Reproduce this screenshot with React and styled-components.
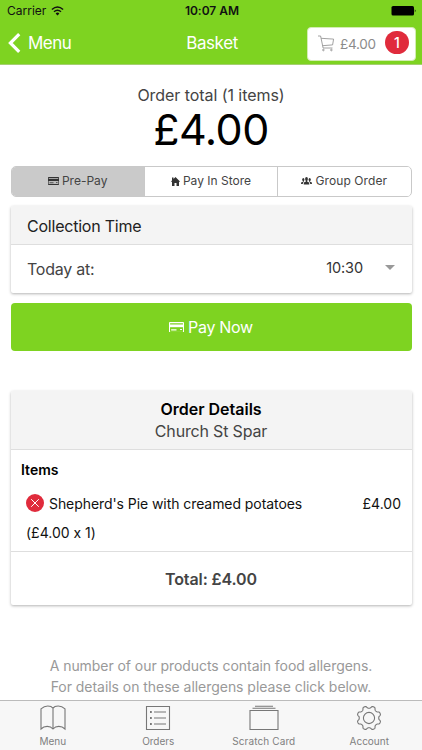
import styled, { createGlobalStyle } from "styled-components";

const GREEN = "#7ed321";
const RED = "#e02b3c";
const BORDER = "#dedede";

const GlobalStyle = createGlobalStyle`
    * {
        box-sizing: border-box;
    }

    body {
        margin: 0;
        background: #fff;
        font-family: Inter, "Liberation Sans", sans-serif;
        font-feature-settings: "calt" 0;
    }

    svg {
        display: block;
        flex: none;
    }
`

const Screen = styled.div`
    width: 422px;
    height: 750px;
    display: flex;
    flex-direction: column;
    overflow: hidden;
`

const Text = styled.span`
    display: block;
    white-space: nowrap;
    font-size: ${({ $size }) => $size}px;
    line-height: ${({ $line }) => $line || 20}px;
    font-weight: ${({ $weight }) => $weight || 400};
    letter-spacing: ${({ $spacing }) => $spacing || 0}px;
    color: ${({ $color }) => $color || "#444"};
`

const Header = styled.header`
    flex: none;
    height: 65px;
    background: ${GREEN};
    border-bottom: 1px solid #a5cf70;
`

const StatusBar = styled.div`
    display: grid;
    grid-template-columns: 1fr auto 1fr;
    align-items: center;
    height: 22px;
    padding: 0 5px 0 7px;
`

const Carrier = styled.div`
    display: flex;
    align-items: center;
    gap: 5px;
`

const Battery = styled.div`
    justify-self: end;
`

const NavBar = styled.nav`
    display: grid;
    grid-template-columns: 1fr auto 1fr;
    align-items: center;
    height: 42px;
    padding: 0 6px 0 8px;
`

const BackButton = styled.div`
    display: flex;
    align-items: center;
    gap: 7px;
`

const CartButton = styled.div`
    justify-self: end;
    display: flex;
    align-items: center;
    width: 109px;
    height: 34px;
    margin-top: 1px;
    padding-left: 10px;
    border: 1px solid #d3ecb4;
    border-radius: 4px;
    background: #fff;
`

const CartPrice = styled(Text)`
    width: 45px;
    padding-left: 5px;
`

const Badge = styled.div`
    display: flex;
    justify-content: center;
    width: 24px;
    height: 23px;
    margin: -3px 0 0 5px;
    border-radius: 12px;
    background: ${RED};
`

const Content = styled.main`
    flex: 1;
    min-height: 0;
    overflow: hidden;
    padding: 20px 10.5px 0;
`

const OrderTotal = styled.div`
    display: flex;
    flex-direction: column;
    align-items: center;
    height: 81px;
`

const Segments = styled.div`
    display: flex;
    height: 31px;
    border: 1px solid #c9c9c9;
    border-radius: 5px;
    overflow: hidden;
`

const Segment = styled.div`
    flex: 1;
    display: flex;
    align-items: center;
    justify-content: center;
    gap: 3px;
    padding-bottom: 1px;
    background: ${({ $active }) => ($active ? "#cacaca" : "#fff")};

    & + & {
        border-left: 1px solid #c9c9c9;
    }
`

const Card = styled.section`
    margin-top: ${({ $top }) => $top}px;
    height: ${({ $height }) => $height}px;
    border-radius: 2px;
    background: #fff;
    box-shadow: 0 1px 3px rgba(0, 0, 0, 0.3);
    overflow: hidden;
`

const CardHeader = styled.div`
    height: ${({ $height }) => $height}px;
    padding: 0 16.5px;
    background: #f4f4f4;
    border-bottom: 1px solid ${BORDER};
`

const DetailsHeader = styled(CardHeader)`
    display: flex;
    flex-direction: column;
    align-items: center;
    padding-top: 7px;
`

const TimeRow = styled.div`
    display: flex;
    align-items: center;
    height: 48px;
    padding: 0 16.5px;
`

const TimeValue = styled(Text)`
    margin: -3px 22px 0 auto;
`

const Arrow = styled.i`
    margin-top: -3px;
    border: 5px solid transparent;
    border-top: 5px solid #999;
    border-bottom: 0;
`

const PayButton = styled.div`
    display: flex;
    align-items: center;
    justify-content: center;
    gap: 4px;
    height: 48px;
    margin-top: 10px;
    border-radius: 4px;
    background: ${GREEN};
`

const Items = styled.div`
    height: 102px;
    padding: 10px 10.5px 0;
    border-bottom: 1px solid ${BORDER};
`

const ItemRow = styled.div`
    display: flex;
    align-items: center;
    height: 28px;
    margin-top: 9px;
    padding-left: 5px;
`

const ItemName = styled(Text)`
    flex: 1;
    margin: 2px 0 0 5px;
`

const ItemPrice = styled(Text)`
    margin-top: 2px;
`

const ItemCount = styled(Text)`
    padding: 6px 0 0 5px;
`

const Total = styled.div`
    display: flex;
    justify-content: center;
    padding-top: 17px;
`

const Allergens = styled.div`
    display: flex;
    flex-direction: column;
    align-items: center;
    margin-top: 51px;
`

const TabBar = styled.footer`
    flex: none;
    display: grid;
    grid-template-columns: repeat(4, 1fr);
    height: 50px;
    border-top: 1px solid #bbb;
    background: #f7f7f7;
`

const Tab = styled.div`
    display: flex;
    flex-direction: column;
    align-items: center;
    padding-top: 3px;
`

const WifiIcon = () => (
    <svg width="13" height="10" viewBox="0 0 13 10" fill="none" stroke="#111" strokeWidth="1.5">
        <path d="M.9 3.5Q6.5-1.6 12.1 3.5M3 5.8Q6.5 2.7 10 5.8" />
        <path d="M4.6 7.4Q6.5 5.8 8.4 7.4L6.5 9.4z" fill="#111" stroke="none" />
    </svg>
)

const BatteryIcon = () => (
    <svg width="26" height="12" viewBox="0 0 26 12">
        <rect x=".5" y="1" width="22.5" height="9.6" rx="1.6" fill="#000" />
        <path d="M23.8 4.2q1.8 1.6 0 3.3z" fill="#000" />
    </svg>
)

const BackIcon = () => (
    <svg width="13" height="20" viewBox="0 0 13 20" fill="none" stroke="#fff" strokeWidth="3.2">
        <path d="M11.2 1.2L2.4 10l8.8 8.8" />
    </svg>
)

const CartIcon = () => (
    <svg width="17" height="17" viewBox="0 0 17 17" fill="none" stroke="#8a8a8a" strokeWidth=".8">
        <path d="M0 1h2.6l2.5 12h9.4M3.2 3.3l12.4.8-1 5.8-10 .8" />
        <circle cx="5.4" cy="15" r=".8" />
        <circle cx="13.4" cy="15" r=".8" />
    </svg>
)

const CardIcon = ({ width, color, gap }) => (
    <svg width={width} height={width * 0.72} viewBox="0 0 14 10">
        <path
            fill={color}
            fillRule="evenodd"
            d="M.8 0h12.4q.8 0 .8.8v8.4q0 .8-.8.8H.8Q0 10 0 9.2V.8Q0 0 .8 0zM1 1.1v1.2h12V1.1zM1 5v4h12V5z"
        />
        <path d="M1 5h12v4H1z" fill={gap} />
        <path d="M2 7.3h5M10.3 7h1.8" stroke={color} strokeWidth="1" />
    </svg>
)

const HomeIcon = () => (
    <svg width="9" height="9" viewBox="0 0 9 9" fill="#333">
        <path d="M4.5 0L9 4.4l-.6.6L8 4.6V9H5.5V6h-2v3H1V4.6l-.4.4L0 4.4l1-1V.5h1.5v1.4z" />
    </svg>
)

const GroupIcon = () => (
    <svg width="11" height="8" viewBox="0 0 11 8" fill="#333">
        <ellipse cx="5.5" cy="2" rx="1.4" ry="2" />
        <ellipse cx="2.3" cy="2.6" rx="1.1" ry="1.6" />
        <ellipse cx="8.7" cy="2.6" rx="1.1" ry="1.6" />
        <path d="M4.9 3h1.2v1.4l1.6.8q.6.5.6 2.3H2.7q0-1.8.6-2.3l1.6-.8zM2 4h.7v1q-.9.6-.9 2H0q0-1.6.7-1.9L2 4.7zM9 4h-.7v1q.9.6.9 2H11q0-1.6-.7-1.9L9 4.7z" />
    </svg>
)

const RemoveIcon = () => (
    <svg width="18" height="18" viewBox="0 0 18 18">
        <circle cx="9" cy="9" r="9" fill={RED} />
        <path d="M5.2 5.2l7.6 7.6M12.8 5.2l-7.6 7.6" stroke="#fff" strokeWidth="1" />
    </svg>
)

const TabIcon = styled.svg.attrs({ width: 30, height: 28, viewBox: "0 0 30 28" })`
    fill: none;
    stroke: #777;
    stroke-width: 1.1;
`

const BookIcon = () => (
    <TabIcon>
        <path d="M15 4.2V25M15 4.2Q13.5 2 9.8 2T3 4.8V25Q5.5 22.4 9.2 22.4T15 25Q17.2 22.4 20.8 22.4T27 25V4.8Q24 2 20.2 2T15 4.2z" />
    </TabIcon>
)

const ListIcon = () => (
    <TabIcon>
        <path d="M3.5 2.5h23v23h-23zM11 8h12M11 14h12M11 20h12" />
        <path d="M7 8h1.8M7 14h1.8M7 20h1.8" strokeWidth="1.8" />
    </TabIcon>
)

const AlbumsIcon = () => (
    <TabIcon>
        <path d="M1 6.5h28v19H1zM3.5 4.3h23M6 2.2h18" />
    </TabIcon>
)

// eight teeth, with a gap straight up
const gearPath = Array.from({ length: 160 }, (_, i) => {
    const angle = (i / 160) * Math.PI * 2;
    const radius = 10.9 + 1.2 * Math.tanh(-1.8 * Math.cos(angle * 8));
    const x = 15 + radius * Math.sin(angle);
    const y = 14 - radius * Math.cos(angle);
    return `${i ? "L" : "M"}${x.toFixed(2)} ${y.toFixed(2)}`;
}).join("") + "z";

const GearIcon = () => (
    <TabIcon>
        <path d={gearPath} />
        <circle cx="15" cy="14" r="5.6" />
    </TabIcon>
)

const tabs = [
    { name: "Menu", Icon: BookIcon },
    { name: "Orders", Icon: ListIcon },
    { name: "Scratch Card", Icon: AlbumsIcon, spacing: 0.12 },
    { name: "Account", Icon: GearIcon },
];

const App = () => {
    return (
        <Screen>
            <GlobalStyle />
            <Header>
                <StatusBar>
                    <Carrier>
                        <Text $size={12} $color="#111">Carrier</Text>
                        <WifiIcon />
                    </Carrier>
                    <Text $size={12} $weight={600} $color="#111">10:07 AM</Text>
                    <Battery><BatteryIcon /></Battery>
                </StatusBar>
                <NavBar>
                    <BackButton>
                        <BackIcon />
                        <Text $size={17} $spacing={-0.5} $color="#fff">Menu</Text>
                    </BackButton>
                    <Text $size={17} $spacing={-0.4} $color="#fff">Basket</Text>
                    <CartButton>
                        <CartIcon />
                        <CartPrice $size={13.5} $spacing={-0.3} $color="#8b8b8b">£4.00</CartPrice>
                        <Badge><Text $size={14} $line={23} $weight={500} $color="#fff">1</Text></Badge>
                    </CartButton>
                </NavBar>
            </Header>
            <Content>
                <OrderTotal>
                    <Text $size={16} $spacing={-0.06}>Order total (1 items)</Text>
                    <Text $size={43} $line={49} $spacing={-0.5} $color="#000">£4.00</Text>
                </OrderTotal>
                <Segments>
                    <Segment $active>
                        <CardIcon width={11} color="#333" gap="#bbb" />
                        <Text $size={12}>Pre-Pay</Text>
                    </Segment>
                    <Segment>
                        <HomeIcon />
                        <Text $size={12}>Pay In Store</Text>
                    </Segment>
                    <Segment>
                        <GroupIcon />
                        <Text $size={12} $spacing={0.1}>Group Order</Text>
                    </Segment>
                </Segments>
                <Card $top={9} $height={87}>
                    <CardHeader $height={39}>
                        <Text $size={16} $line={40} $spacing={-0.22} $color="#222">Collection Time</Text>
                    </CardHeader>
                    <TimeRow>
                        <Text $size={16} $spacing={-0.25}>Today at:</Text>
                        <TimeValue $size={14.5} $spacing={-0.1} $color="#333">10:30</TimeValue>
                        <Arrow />
                    </TimeRow>
                </Card>
                <PayButton>
                    <CardIcon width={15} color="#fff" gap={GREEN} />
                    <Text $size={16} $spacing={-0.3} $color="#fff">Pay Now</Text>
                </PayButton>
                <Card $top={40} $height={214}>
                    <DetailsHeader $height={59}>
                        <Text $size={16} $line={22} $weight={600} $color="#000">Order Details</Text>
                        <Text $size={16} $line={22} $spacing={-0.17}>Church St Spar</Text>
                    </DetailsHeader>
                    <Items>
                        <Text $size={14} $weight={600} $color="#000">Items</Text>
                        <ItemRow>
                            <RemoveIcon />
                            <ItemName $size={14} $spacing={-0.07} $color="#111">Shepherd's Pie with creamed potatoes</ItemName>
                            <ItemPrice $size={14} $color="#111">£4.00</ItemPrice>
                        </ItemRow>
                        <ItemCount $size={14} $color="#111">(£4.00 x 1)</ItemCount>
                    </Items>
                    <Total>
                        <Text $size={16} $weight={600} $spacing={-0.1} $color="#444">Total: £4.00</Text>
                    </Total>
                </Card>
                <Allergens>
                    <Text $size={14} $spacing={-0.06} $color="#999">A number of our products contain food allergens.</Text>
                    <Text $size={14} $line={22} $spacing={-0.04} $color="#999">For details on these allergens please click below.</Text>
                </Allergens>
            </Content>
            <TabBar>
                {tabs.map(({ name, Icon, spacing }) => (
                    <Tab key={name}>
                        <Icon />
                        <Text $size={10} $line={19} $spacing={spacing} $color="#808080">{name}</Text>
                    </Tab>
                ))}
            </TabBar>
        </Screen>
    )
}

export default App;
